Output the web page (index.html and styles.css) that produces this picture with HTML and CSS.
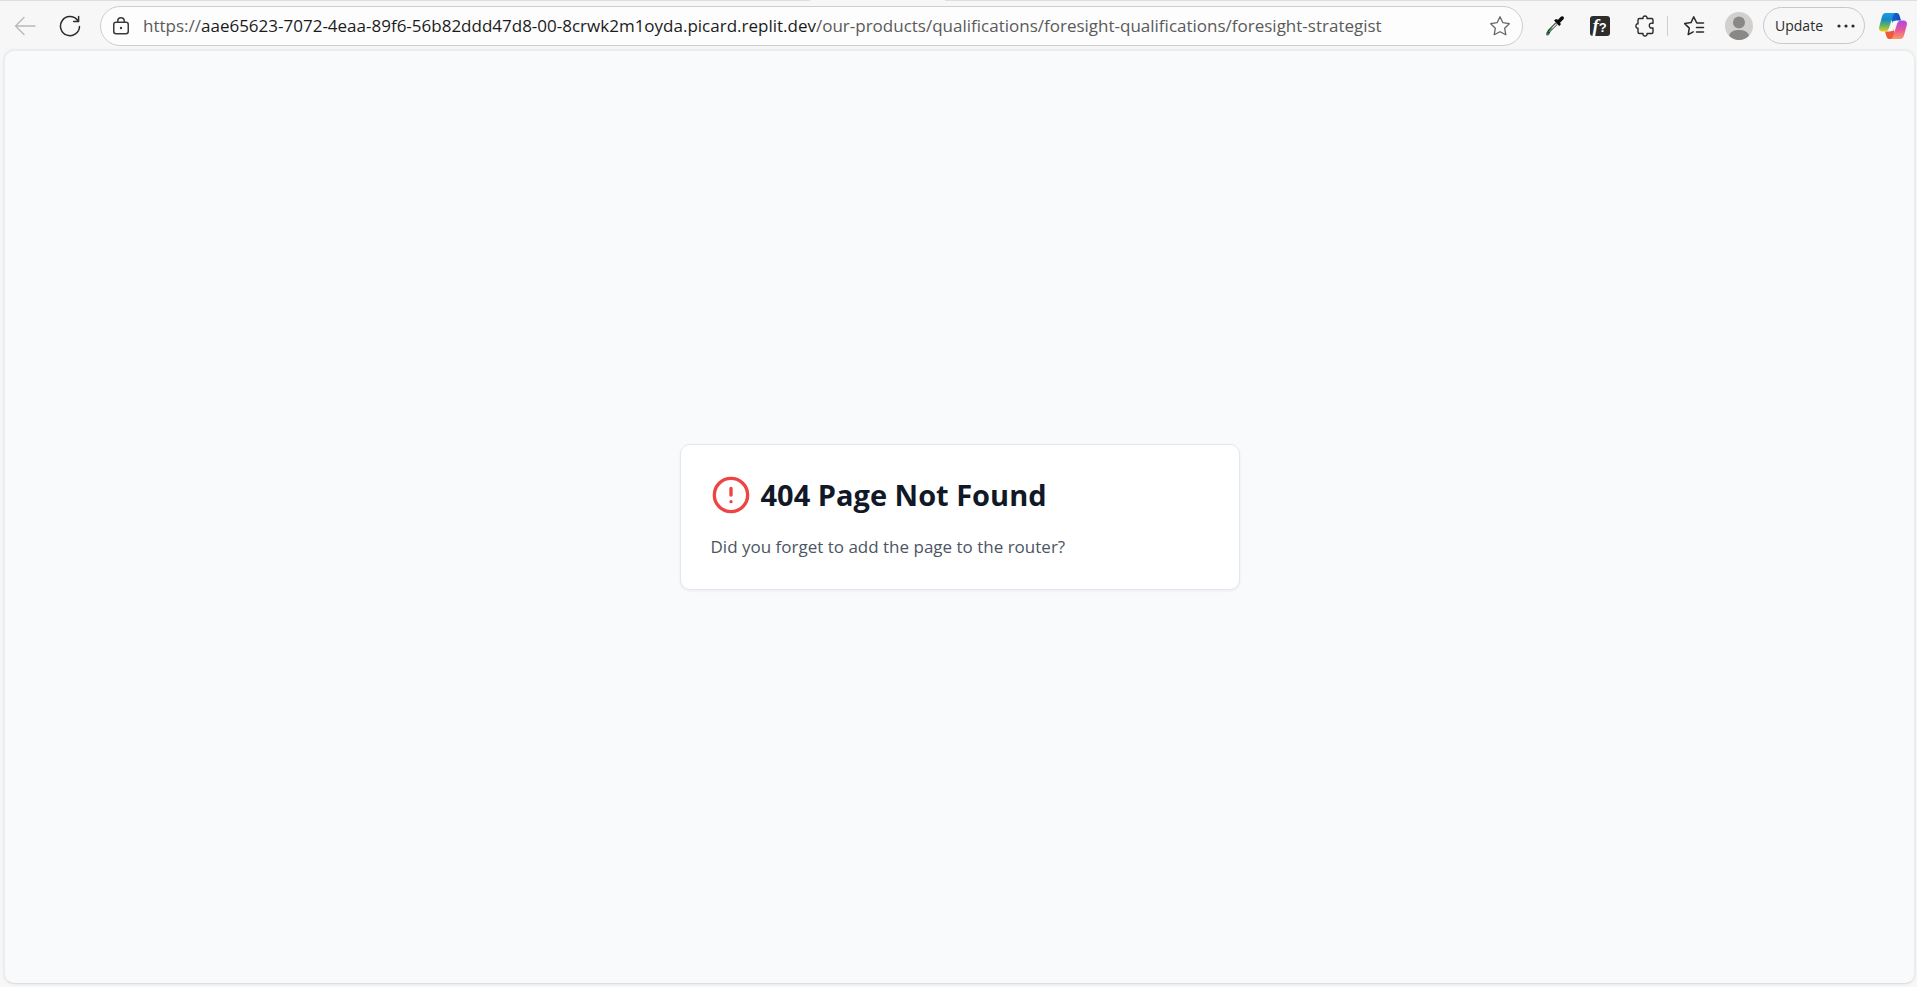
FILE: index.html
```
<!DOCTYPE html>
<html lang="en">
<head>
    <meta charset="UTF-8">
    <meta name="viewport" content="width=device-width, initial-scale=1.0">
    <title>404 Page Not Found</title>
    <link rel="stylesheet" href="styles.css">
</head>
<body>
    <header class="toolbar">
        <div class="tab-edge"></div>

        <button class="tool-button" aria-label="Back" disabled>
            <svg width="22" height="22" viewBox="0 0 22 22" fill="none" stroke="#b9b9b9" stroke-width="1.3" stroke-linecap="round" stroke-linejoin="round">
                <path d="M21 11H1.5M10 2.5L1.5 11l8.500 8.500"/>
            </svg>
        </button>
        <button class="tool-button" aria-label="Refresh">
            <svg width="22" height="22" viewBox="0 0 22 22" fill="none" stroke="#2b2b2b" stroke-width="1.5" stroke-linecap="round" stroke-linejoin="round">
                <path d="M20.500 11.500a9.500 9.500 0 1 1-2.200-6.500L19.500 6.500M19.600 1.500v5h-5"/>
            </svg>
        </button>

        <div class="address-bar">
            <svg width="18" height="20" viewBox="0 0 18 20" fill="none" stroke="#3a3a3a" stroke-width="1.5">
                <rect x="1.750" y="6.250" width="14.500" height="11.500" rx="2.200"/>
                <path d="M5.750 6V5a3.250 3.250 0 0 1 6.500 0V6"/>
                <circle cx="9" cy="12" r="1.200" fill="#3a3a3a" stroke="none"/>
            </svg>
            <div class="url"><span class="dim">https://</span>aae65623-7072-4eaa-89f6-56b82ddd47d8-00-8crwk2m1oyda.picard.replit.dev<span class="dim">/our-products/qualifications/foresight-qualifications/foresight-strategist</span></div>
            <button class="favorite" aria-label="Add to favorites">
                <svg width="22" height="22" viewBox="0 0 22 22" fill="none" stroke="#666" stroke-width="1.3" stroke-linejoin="round">
                    <path d="M11 1.800l2.900 5.900 6.400 1-4.600 4.600 1.100 6.500L11 16.700l-5.800 3.100 1.100-6.500L1.700 8.700l6.400-1z"/>
                </svg>
            </button>
        </div>

        <div class="extensions">
            <button class="tool-button" aria-label="Color picker">
                <svg width="20" height="22" viewBox="0 0 20 22">
                    <path d="M11.500 8.500L4.500 15.500 2.600 19" fill="none" stroke="#333" stroke-width="3" stroke-linejoin="round"/>
                    <path d="M11.500 8.800L6 14.300" stroke="#d8ddd9" stroke-width="1.500"/>
                    <path d="M7.500 13L4 16.800" stroke="#3ba55c" stroke-width="1.500"/>
                    <circle cx="2.500" cy="19" r="1.500" fill="#3c7a50"/>
                    <path d="M9 5.500l2-1.500 2 .8 2.600-2.800c1-1 2.800-.8 3.200.2.400.900 0 1.800-.8 2.600L15.200 7.500l.6 2-1.600 1.600z" fill="#0c0c0c"/>
                </svg>
            </button>
            <button class="tool-button" aria-label="Font finder">
                <span class="font-icon"><i>f</i>?</span>
            </button>
            <button class="tool-button" aria-label="Extensions">
                <svg width="20" height="22" viewBox="0 0 20 22" fill="none" stroke="#2b2b2b" stroke-width="1.400" stroke-linejoin="round">
                    <path d="M4.500 3.500H8C7.700 1.800 8.700 1 10 1s2.300.8 2 2.500h4.500a1.500 1.500 0 0 1 1.500 1.500v3.200h-1c-3.600-.6-3.600 5.400 0 4.800h1V17a1.500 1.500 0 0 1-1.500 1.500H12c.3 1.700-.7 2.500-2 2.500s-2.300-.8-2-2.500H4.500A1.500 1.500 0 0 1 3 17v-3.800C.200 13.600.200 8.400 3 8.800V5a1.500 1.500 0 0 1 1.500-1.500z"/>
                </svg>
            </button>
        </div>

        <div class="profile">
            <button class="tool-button" aria-label="Favorites">
                <svg width="22" height="22" viewBox="0 0 22 22" fill="none" stroke="#2b2b2b" stroke-width="1.500" stroke-linecap="round" stroke-linejoin="round">
                    <path d="M20.500 8H13.800L10.700 1.800 8 7.600l-6.300 1 4.600 4.500-1.100 6.500 5-2.800M13.500 12.500h7M13.500 17h7"/>
                </svg>
            </button>
            <button class="tool-button" aria-label="Profile">
                <svg width="28" height="28" viewBox="0 0 28 28">
                    <circle cx="14" cy="14" r="14" fill="#d2d0ce"/>
                    <circle cx="14" cy="10.500" r="6" fill="#8a8886"/>
                    <path d="M4 23.800C5 19.800 8.500 18 14 18s9 1.800 10 5.800A14 14 0 0 1 4 23.800z" fill="#8a8886"/>
                </svg>
            </button>
            <button class="update-button">
                Update
                <svg width="18" height="4" viewBox="0 0 18 4" fill="#2b2b2b">
                    <circle cx="2" cy="2" r="1.600"/>
                    <circle cx="9" cy="2" r="1.600"/>
                    <circle cx="16" cy="2" r="1.600"/>
                </svg>
            </button>
            <button class="copilot" aria-label="Copilot">
                <svg width="28" height="26" viewBox="0 0 28 26">
                    <defs>
                        <linearGradient id="cp-left" x1="0" y1="0" x2="0" y2="1">
                            <stop offset="0" stop-color="#159fe8"/>
                            <stop offset=".35" stop-color="#1888c9"/>
                            <stop offset=".65" stop-color="#55b469"/>
                            <stop offset="1" stop-color="#efcb17"/>
                        </linearGradient>
                        <linearGradient id="cp-right" x1="0" y1="0" x2="0" y2="1">
                            <stop offset="0" stop-color="#a84bed"/>
                            <stop offset=".5" stop-color="#e65698"/>
                            <stop offset="1" stop-color="#fb9a62"/>
                        </linearGradient>
                        <linearGradient id="cp-top" x1="0" y1="0" x2="1" y2="0">
                            <stop offset="0" stop-color="#0b70d8"/>
                            <stop offset="1" stop-color="#1848b5"/>
                        </linearGradient>
                    </defs>
                    <path d="M11 0h6.500c2 0 2.700 1.200 3.300 3.400l1.200 4.200h-4.500c-2.300 0-3.200 1.200-4 3.500z" fill="url(#cp-top)"/>
                    <path d="M17 26h-6.500c-2 0-2.700-1.200-3.300-3.400L6 18.400h4.500c2.300 0 3.200-1.200 4-3.500z" fill="#ee5939"/>
                    <path d="M6.500 0H17c-2 .200-2.700 1.500-3.500 4l-3.300 10.500c-.9 2.700-2 4-4.500 4H3.500C.5 18.500-.5 16.400.3 13.500L3 3.500C3.700 1.200 4.700 0 6.500 0z" fill="url(#cp-left)"/>
                    <path d="M21.500 26H11c2-.2 2.700-1.500 3.500-4l3.300-10.500c.9-2.700 2-4 4.500-4h2.200c3 0 4 2.100 3.200 5l-2.700 10c-.7 2.300-1.700 3.500-3.500 3.500z" fill="url(#cp-right)"/>
                    <path d="M13.800 8.300h3.400l-3 9.700h-3.400z" fill="#f7f7f7"/>
                </svg>
            </button>
        </div>
    </header>

    <main class="page">
        <div class="card">
            <div class="card-header">
                <svg width="40" height="40" viewBox="0 0 24 24" fill="none" stroke="#ef4444" stroke-width="2" stroke-linecap="round" stroke-linejoin="round">
                    <circle cx="12" cy="12" r="10"/>
                    <path d="M12 8v4M12 16h.01"/>
                </svg>
                <h1>404 Page Not Found</h1>
            </div>
            <p>Did you forget to add the page to the router?</p>
        </div>
    </main>
</body>
</html>
```

FILE: styles.css
```
* {
    box-sizing: border-box;
}
body {
    margin: 0;
    min-height: 100vh;
    display: flex;
    flex-direction: column;
    background: #f7f7f7;
    font-family: "Segoe UI", "Open Sans", "Noto Sans", sans-serif;
}
button {
    padding: 0;
    border: none;
    background: none;
    color: inherit;
    font: inherit;
    cursor: pointer;
}
svg {
    display: block;
    flex-shrink: 0;
}
.toolbar {
    position: relative;
    display: flex;
    align-items: center;
    height: 50px;
    padding: 0 10px 0 2px;
    border-top: 1px solid #dedede;
}
/* the open tab joins the toolbar here */
.tab-edge {
    position: absolute;
    top: -1px;
    left: 810px;
    width: 135px;
    height: 1px;
    background: #f7f7f7;
}
.tool-button {
    display: flex;
    justify-content: center;
    align-items: center;
    width: 45px;
    height: 36px;
}
.address-bar {
    flex: 1;
    min-width: 0;
    display: flex;
    align-items: center;
    height: 40px;
    margin-left: 8px;
    padding: 0 11px;
    border: 1px solid #cdcdcd;
    border-radius: 20px;
    background: #fdfdfd;
}
.url {
    flex: 1;
    min-width: 0;
    margin-left: 13px;
    overflow: hidden;
    white-space: nowrap;
    font-size: 17px;
    line-height: 24px;
    color: #1b1b1b;
}
.url .dim {
    color: #5a5a5a;
}
.extensions {
    display: flex;
    margin-left: 9px;
    border-right: 1px solid #cfcfcf;
    height: 20px;
    align-items: center;
}
.font-icon {
    width: 20px;
    height: 20px;
    border-radius: 3px;
    background: #2d2d2d;
    color: #fff;
    font: bold 13px/19px "Liberation Sans", sans-serif;
    text-align: center;
}
.font-icon i {
    font: italic bold 19px/19px "Liberation Serif", serif;
}
.profile {
    display: flex;
    align-items: center;
    margin-left: 3px;
}
.update-button {
    display: flex;
    align-items: center;
    gap: 14px;
    height: 37px;
    margin-left: 2px;
    padding: 0 9px 0 11px;
    border: 1px solid #c8c8c8;
    border-radius: 19px;
    font-size: 14px;
    line-height: 20px;
    color: #2b2b2b;
}
.copilot {
    margin-left: 14px;
}
.page {
    flex: 1;
    display: flex;
    justify-content: center;
    align-items: center;
    margin: 0 2px 3px 4px;
    border: 1px solid #ececec;
    border-bottom-color: #dedede;
    border-radius: 10px;
    background: #f9fafb;
    box-shadow: 0 0 3px rgba(0, 0, 0, 0.1);
}
.card {
    width: 100%;
    max-width: 560px;
    padding: 30px;
    border: 1px solid #e2e8f0;
    border-radius: 10px;
    background: #fff;
    box-shadow: 0 1px 3px rgba(0, 0, 0, 0.06);
}
.card-header {
    display: flex;
    align-items: center;
    gap: 10px;
}
.card h1 {
    margin: 0;
    font-size: 29px;
    line-height: 40px;
    font-weight: 700;
    color: #111827;
}
.card p {
    margin: 20px 0 0;
    font-size: 17px;
    line-height: 24px;
    color: #4b5563;
}
```
